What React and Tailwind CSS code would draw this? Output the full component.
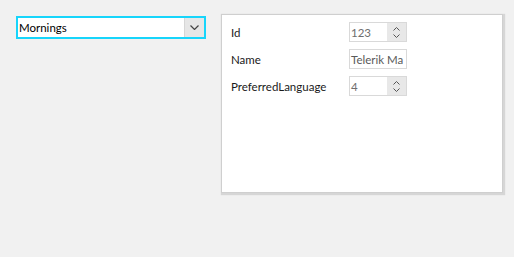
import React from "react";

const font = { fontFamily: 'Lato, "Noto Sans", sans-serif' };

function Spin({ value }) {
  return (
    <div className="flex h-[20px] w-[58px] border border-[#d9d9d9] bg-white">
      <div className="flex-1 pl-[1px] text-[11.5px] leading-[19px] text-[#6e6e6e]">{value}</div>
      <div className="flex w-[19px] flex-col items-center justify-center gap-[3px] bg-[#e8e8e8]">
        <svg width="7" height="4" viewBox="0 0 7 4"><path d="M0.5 3.5 L3.5 0.5 L6.5 3.5" fill="none" stroke="#555" strokeWidth="1" /></svg>
        <svg width="7" height="4" viewBox="0 0 7 4"><path d="M0.5 0.5 L3.5 3.5 L6.5 0.5" fill="none" stroke="#555" strokeWidth="1" /></svg>
      </div>
    </div>
  );
}

export default function App() {
  return (
    <div className="flex h-[257px] w-[514px] items-start bg-[#f1f1f1] pl-[16px] pt-[14px]" style={font}>
      <div className="mt-[2px] flex h-[23px] w-[190px] border-2 border-[#17d5fb] bg-white">
        <div className="flex-1 pl-[1px] text-[11.5px] leading-[19px] text-black">Mornings</div>
        <div className="flex w-[20px] items-center justify-center border-l border-[#d6d6d6] bg-[#e6e6e6]">
          <svg width="9" height="5" viewBox="0 0 9 5"><path d="M0.5 0.5 L4.5 4.5 L8.5 0.5" fill="none" stroke="#444" strokeWidth="1.2" /></svg>
        </div>
      </div>
      <div className="ml-[15px] h-[179px] w-[282px] border border-[#cfcfcf] bg-white pl-[9px] pt-[7px] shadow-[1px_1px_1px_1px_#d6d6d6]">
        <div className="flex flex-col gap-[7px]">
          <div className="flex h-[20px] items-center">
            <div className="w-[118px] pt-[1px] text-[11.5px] text-[#1a1a1a]">Id</div>
            <Spin value="123" />
          </div>
          <div className="flex h-[20px] items-center">
            <div className="w-[118px] pt-[1px] text-[11.5px] text-[#1a1a1a]">Name</div>
            <div className="h-[20px] w-[58px] overflow-hidden whitespace-nowrap border border-[#d9d9d9] bg-white pl-[1px] text-[11.5px] leading-[19px] text-[#5a5a5a]">Telerik Ma</div>
          </div>
          <div className="flex h-[20px] items-center">
            <div className="w-[118px] pt-[1px] text-[11.5px] text-[#1a1a1a]">PreferredLanguage</div>
            <Spin value="4" />
          </div>
        </div>
      </div>
    </div>
  );
}
